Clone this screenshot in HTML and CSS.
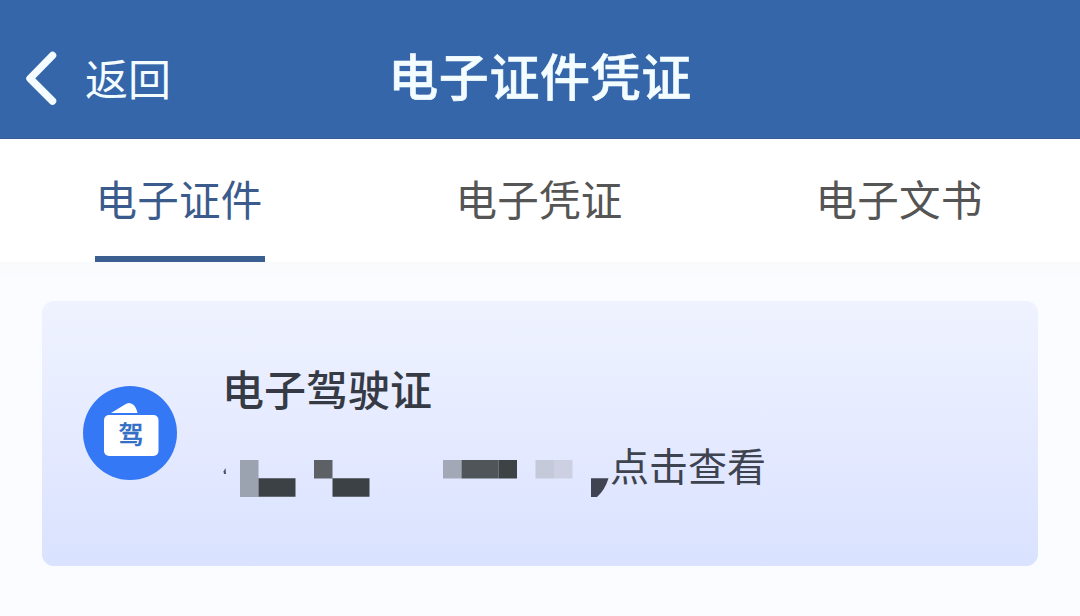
FILE: index.html
```html
<!DOCTYPE html>
<html lang="zh-CN">
<head>
<meta charset="utf-8">
<title>电子证件凭证</title>
<link rel="stylesheet" href="styles.css">
</head>
<body>
<header class="header">
  <div class="back">
    <svg class="chevron" width="36" height="56" viewBox="0 0 36 56"><path d="M30.500 6.500 8 29.500 30.500 52" fill="none" stroke="#f5fcff" stroke-width="7.500" stroke-linecap="round" stroke-linejoin="round"/></svg>
    <span class="back-label">返回</span>
  </div>
  <h1 class="title">电子证件凭证</h1>
</header>
<nav class="tabs">
  <div class="tab"><span class="tab-label active">电子证件</span></div>
  <div class="tab"><span class="tab-label">电子凭证</span></div>
  <div class="tab"><span class="tab-label">电子文书</span></div>
</nav>
<main class="content">
  <section class="card">
    <div class="badge">
      <svg class="wallet" width="94" height="94" viewBox="0 0 94 94"><path d="M28 27 42 18.500Q46 15.500 50 18.500Q53 20.500 54.500 27Z" fill="#fff"/><rect x="21" y="29" width="54.500" height="41" rx="5" fill="#fff"/></svg>
      <span class="badge-text">驾</span>
    </div>
    <div class="info">
      <h2 class="name">电子驾驶证</h2>
      <div class="detail">
        <svg class="mask" width="388" height="56" viewBox="222 440 388 56">
          <path d="M225.500 468 223.500 471.500 224 474H226Z" fill="#4b5265"/>
          <path d="M240 460h18.500v37H240z" fill="#9ba3b0"/>
          <path d="M258.500 478.300h37v18.500h-37z" fill="#3c4145"/>
          <path d="M314 460h18.500v18.500H314z" fill="#5d6065"/>
          <path d="M332.500 478.300h37v18.500h-37z" fill="#3c4145"/>
          <path d="M443 460h18.500v18.500H443z" fill="#a3a8b7"/>
          <path d="M461.500 460h37v18.500h-37z" fill="#50555a"/>
          <path d="M498.500 460H517v18.500h-18.500z" fill="#3d4245"/>
          <path d="M535.500 460H554v18.500h-18.500z" fill="#c5cadb"/>
          <path d="M554 460h18.500v18.500H554z" fill="#cdd0e2"/>
          <path d="M591 478.300h17.500Q605 490 597 497h-6z" fill="#3f4352"/>
        </svg>
        <span class="view">点击查看</span>
      </div>
    </div>
  </section>
</main>
</body>
</html>
```
FILE: styles.css
```css
* { box-sizing: border-box; }
body {
  margin: 0;
  width: 1080px;
  height: 616px;
  overflow: hidden;
  background: #fafcff;
  font-family: "Noto Sans CJK SC", sans-serif;
}
.header {
  display: grid;
  grid-template-columns: 1fr auto 1fr;
  align-items: start;
  height: 139px;
  padding-top: 44px;
  background: #3566aa;
  border-bottom: 1px solid #395c93;
  color: #f3fcff;
}
.back {
  display: flex;
  padding: 5px 0 0 22px;
  font-size: 43px;
  line-height: 56px;
}
.back-label { margin-left: 27px; }
.chevron, .mask { display: block; flex: none; }
.title {
  margin: 0;
  font-size: 50px;
  font-weight: 500;
  line-height: 60px;
  letter-spacing: 0.6px;
  -webkit-text-stroke: 0.6px #f3fcff;
}
.tabs {
  display: grid;
  grid-template-columns: repeat(3, 1fr);
  height: 123px;
  background: #fff;
}
.tab { display: flex; justify-content: center; }
.tab-label {
  height: 123px;
  width: 170px;
  padding-right: 2px;
  text-align: center;
  font-size: 41.500px;
  letter-spacing: 0.2px;
  line-height: 118px;
  color: #555;
  white-space: nowrap;
}
.tab-label.active {
  color: #3b5b8c;
  border-bottom: 6px solid #3b5f91;
}
.content {
  height: 354px;
  padding: 39px 42px 50px;
  background: linear-gradient(#f9fafb, #fafcff 20px);
}
.card {
  display: flex;
  height: 265px;
  padding-left: 41px;
  border-radius: 12px;
  background: linear-gradient(#eff3ff, #e5eaff 50%, #d9e2ff);
}
.badge {
  display: grid;
  width: 94px;
  height: 94px;
  margin-top: 85px;
  border-radius: 50%;
  background: #3478f6;
}
.wallet, .badge-text { grid-area: 1 / 1; }
.badge-text {
  padding-top: 35px;
  padding-left: 2px;
  text-align: center;
  font-size: 25px;
  line-height: 25px;
  font-weight: 500;
  color: #336fc5;
  -webkit-text-stroke: 0.4px #336fc5;
}
.info { padding: 57px 0 0 45px; }
.name {
  margin: 0;
  font-size: 42px;
  font-weight: 500;
  line-height: 60px;
  color: #363a45;
}
.detail { display: flex; margin-top: 22px; }
.mask { overflow: visible; }
.view {
  font-size: 39px;
  line-height: 48px;
  color: #3e4350;
}
```
